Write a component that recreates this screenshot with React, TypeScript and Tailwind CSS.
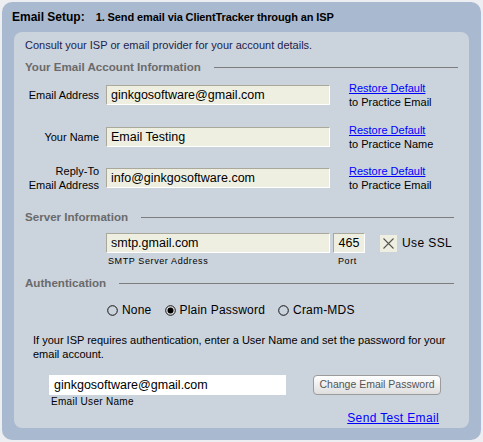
import React from 'react';

const font = { fontFamily: '"Liberation Sans", Arial, sans-serif' };

const SectionHeader: React.FC<{ title: string; right?: string }> = ({ title, right = 'mr-0' }) => (
  <div className="flex items-center h-[16px]">
    <span className="text-[11.6px] font-bold text-[#6a6a6a] leading-[16px] whitespace-nowrap">{title}</span>
    <div className={`flex-1 h-px bg-[#7d7d7d] ml-[13px] ${right}`}></div>
  </div>
);

const Field: React.FC<{ value: string; className?: string }> = ({ value, className = '' }) => (
  <div
    className={`h-[20px] bg-[#efefe1] border-t border-l border-[#a9a89b] border-b border-r border-b-white border-r-white flex items-center px-[4px] text-[12.5px] text-black whitespace-nowrap overflow-hidden ${className}`}
  >
    {value}
  </div>
);

const Restore: React.FC<{ what: string }> = ({ what }) => (
  <div className="ml-[19px] text-[11px] leading-[14px]">
    <div className="text-[#0000ff] underline">Restore Default</div>
    <div className="text-black">to Practice {what}</div>
  </div>
);

const Radio: React.FC<{ label: string; checked?: boolean }> = ({ label, checked }) => (
  <div className="flex items-center mr-[13px]">
    <svg width="11" height="11" viewBox="0 0 11 11" className="mr-[4px]">
      <circle cx="5.5" cy="5.5" r="4.8" fill={checked ? '#e6e6e6' : 'none'} stroke="#111" strokeWidth="1" />
      {checked && <circle cx="5.5" cy="5.5" r="3" fill="#000" />}
    </svg>
    <span className="text-[12px] leading-[16px] text-black tracking-[0.2px]">{label}</span>
  </div>
);

export default function App() {
  return (
    <div className="w-[483px] h-[442px] bg-[#eceef1] p-[2px]" style={font}>
      <div className="h-full rounded-[10px] bg-[#a9b9cf] flex flex-col px-[12px] pb-[12px]">
        <div className="h-[30px] flex items-center">
          <span className="text-[12px] font-bold text-black -ml-[2px]">Email Setup:</span>
          <span className="text-[11px] font-bold text-black ml-[11px] tracking-[-0.1px]">
            1. Send email via ClientTracker through an ISP
          </span>
        </div>

        <div className="flex-1 rounded-[8px] bg-[#cbd3dd] pl-[11px] pr-[11px] pt-[6px]">
          <div className="text-[11px] leading-[14px] text-[#1d1d4a]">
            Consult your ISP or email provider for your account details.
          </div>

          <div className="mt-[7px]">
            <SectionHeader title="Your Email Account Information" />
          </div>

          <div className="flex items-center h-[28px] mt-[6px]">
            <div className="w-[74px] text-right text-[11px] leading-[14px] text-black">Email Address</div>
            <Field value="ginkgosoftware@gmail.com" className="ml-[7px] w-[224px]" />
            <Restore what="Email" />
          </div>

          <div className="flex items-center h-[28px] mt-[14px]">
            <div className="w-[74px] text-right text-[11px] leading-[14px] text-black">Your Name</div>
            <Field value="Email Testing" className="ml-[7px] w-[224px]" />
            <Restore what="Name" />
          </div>

          <div className="flex items-center h-[28px] mt-[13px]">
            <div className="w-[74px] text-right text-[11px] leading-[14px] text-black">
              Reply-To
              <br />
              Email Address
            </div>
            <Field value="info@ginkgosoftware.com" className="ml-[7px] w-[224px]" />
            <Restore what="Email" />
          </div>

          <div className="mt-[17px]">
            <SectionHeader title="Server Information" right="mr-[4px]" />
          </div>

          <div className="flex items-center mt-[8px] pl-[81px]">
            <Field value="smtp.gmail.com" className="w-[224px]" />
            <Field value="465" className="ml-[3px] w-[32px] justify-center" />
            <div className="ml-[15px] w-[17px] h-[17px] bg-[#efefe1] flex items-center justify-center">
              <svg width="13" height="13" viewBox="0 0 13 13">
                <path d="M1.5 1.5 L11.5 11.5 M11.5 1.5 L1.5 11.5" stroke="#555" strokeWidth="1.1" />
              </svg>
            </div>
            <span className="ml-[5px] text-[12px] text-black tracking-[0.4px]">Use SSL</span>
          </div>
          <div className="flex h-[12px] mt-[2px] text-[9px] leading-[12px] tracking-[0.6px] text-black">
            <span className="ml-[83px] w-[230px]">SMTP Server Address</span>
            <span>Port</span>
          </div>

          <div className="mt-[8px]">
            <SectionHeader title="Authentication" right="mr-[4px]" />
          </div>

          <div className="flex items-center h-[16px] mt-[11px] pl-[82px]">
            <Radio label="None" />
            <Radio label="Plain Password" checked />
            <Radio label="Cram-MDS" />
          </div>

          <div className="mt-[15px] ml-[8px] w-[420px] text-[11px] leading-[14px] text-black">
            If your ISP requires authentication, enter a User Name and set the password for your email account.
          </div>

          <div className="flex items-center mt-[14px] pl-[24px]">
            <div className="w-[237px] h-[20px] bg-white flex items-center px-[5px] text-[12.5px] text-black">
              ginkgosoftware@gmail.com
            </div>
            <button className="ml-[27px] w-[128px] h-[20px] rounded-[4px] border border-[#9b9b9b] bg-gradient-to-b from-white to-[#dedede] text-[10.5px] text-[#555] flex items-center justify-center">
              Change Email Password
            </button>
          </div>
          <div className="h-[12px] mt-[1px] ml-[26px] text-[10px] leading-[12px] tracking-[0.3px] text-black">
            Email User Name
          </div>

          <div className="flex justify-end mt-[3px] pr-[19px]">
            <span className="text-[12px] leading-[14px] text-[#0000ff] underline tracking-[0.35px]">Send Test Email</span>
          </div>
        </div>
      </div>
    </div>
  );
}
